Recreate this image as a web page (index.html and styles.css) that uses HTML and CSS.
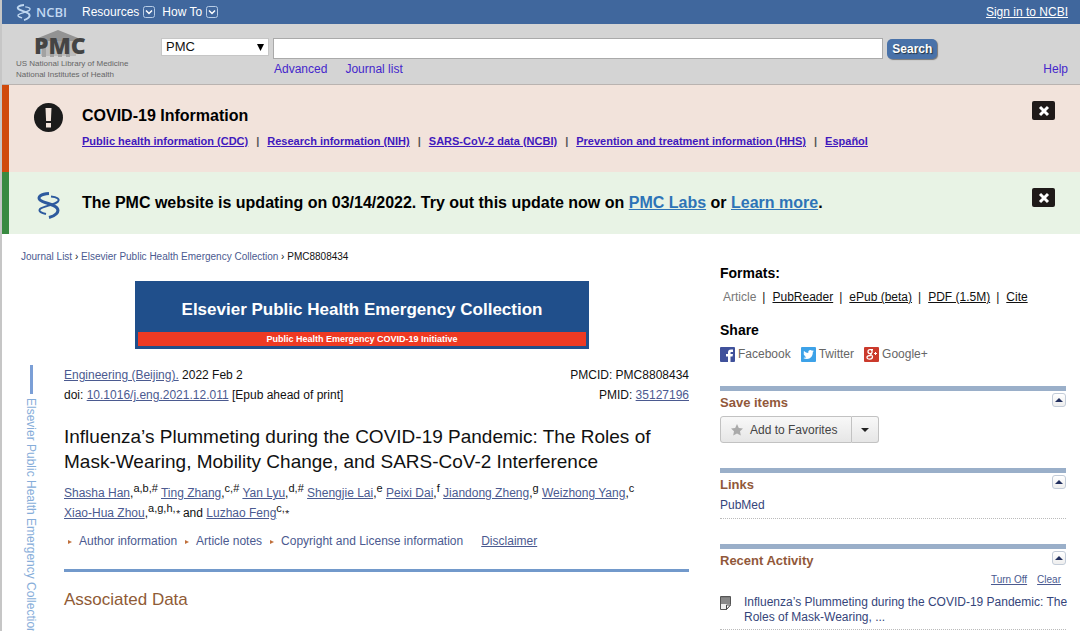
FILE: index.html
```html
<!DOCTYPE html>
<html lang="en">
<head>
<meta charset="utf-8">
<title>Influenza’s Plummeting during the COVID-19 Pandemic - PMC</title>
<link rel="stylesheet" href="styles.css">
</head>
<body>
<nav class="topbar">
  <a class="ncbi" href="#">
    <svg class="helix" viewBox="0 0 24 27" aria-hidden="true"><path class="strand" d="M12 1.500C4 2 0 5 3 8c3 3 14 4 17 8 3 4-2 8-8 9.500"/><path class="strand thin" d="M14 4.500c6 .5 9 2.500 7 5C18 13 6 14 3 17c-2 2.500 2 4 6 5"/></svg>
    <span>NCBI</span>
  </a>
  <button class="menu" type="button">Resources
    <svg viewBox="0 0 12 12" aria-hidden="true"><rect x=".5" y=".5" width="11" height="11" rx="2"/><path d="M3 4.500l3 3 3-3"/></svg>
  </button>
  <button class="menu" type="button">How To
    <svg viewBox="0 0 12 12" aria-hidden="true"><rect x=".5" y=".5" width="11" height="11" rx="2"/><path d="M3 4.500l3 3 3-3"/></svg>
  </button>
  <a class="signin" href="#">Sign in to NCBI</a>
</nav>

<header class="header">
  <div class="brand">
    <a class="pmc" href="#">
      <svg class="pmc-roof" viewBox="0 0 50 28" aria-hidden="true"><path d="M24 0L44 8v3H4V8z" fill="#939393"/><path d="M7 11h35v15H7z" fill="#bcbcbc"/><path d="M10 11v16M18 11v16M26 11v16M34 11v16" stroke="#a2a2a2" stroke-width="4"/></svg>
      <span>PMC</span>
    </a>
    <div class="org">US National Library of Medicine<br>National Institutes of Health</div>
  </div>
  <form class="search">
    <div class="db">
      <select aria-label="Database"><option>PMC</option></select>
      <svg viewBox="0 0 7 7" aria-hidden="true"><path d="M0 0h7L3.500 7z"/></svg>
    </div>
    <div class="query">
      <input type="text" aria-label="Search term">
      <div class="sub"><a href="#">Advanced</a><a href="#">Journal list</a></div>
    </div>
    <button class="go" type="submit">Search</button>
  </form>
  <a class="help" href="#">Help</a>
</header>

<section class="notice covid">
  <svg class="notice-icon" viewBox="0 0 29 29" aria-hidden="true"><circle cx="14.500" cy="14.500" r="14.500" fill="#1b1b1b"/><path d="M11.500 5h6l-.6 13h-4.800zM12 20h5v4.500h-5z" fill="#f2e4dc"/></svg>
  <div class="notice-body">
    <h2>COVID-19 Information</h2>
    <p class="notice-links"><a href="#">Public health information (CDC)</a><i>|</i><a href="#">Research information (NIH)</a><i>|</i><a href="#">SARS-CoV-2 data (NCBI)</a><i>|</i><a href="#">Prevention and treatment information (HHS)</a><i>|</i><a href="#">Español</a></p>
  </div>
  <button class="close" type="button" aria-label="Close"><svg viewBox="0 0 12 12" aria-hidden="true"><path d="M2 2l8 8M10 2l-8 8"/></svg></button>
</section>

<section class="notice update">
  <svg class="notice-icon helix" viewBox="0 0 24 27" aria-hidden="true"><path class="strand" d="M12 1.500C4 2 0 5 3 8c3 3 14 4 17 8 3 4-2 8-8 9.500"/><path class="strand thin" d="M14 4.500c6 .5 9 2.500 7 5C18 13 6 14 3 17c-2 2.500 2 4 6 5"/></svg>
  <div class="notice-body">
    <h2>The PMC website is updating on 03/14/2022. Try out this update now on <a href="#">PMC Labs</a> or <a href="#">Learn more</a>.</h2>
  </div>
  <button class="close" type="button" aria-label="Close"><svg viewBox="0 0 12 12" aria-hidden="true"><path d="M2 2l8 8M10 2l-8 8"/></svg></button>
</section>

<div class="page">
  <div class="left">
    <nav class="crumbs"><a href="#">Journal List</a> › <a href="#">Elsevier Public Health Emergency Collection</a> › <span>PMC8808434</span></nav>
    <div class="journal-banner">
      <strong>Elsevier Public Health Emergency Collection</strong>
      <span>Public Health Emergency COVID-19 Initiative</span>
    </div>
    <div class="content">
      <div class="rail">Elsevier Public Health Emergency Collection</div>
      <main class="article">
        <div class="cite">
          <div><a href="#">Engineering (Beijing).</a> 2022 Feb 2<br>doi: <a href="#">10.1016/j.eng.2021.12.011</a> [Epub ahead of print]</div>
          <div class="ids">PMCID: PMC8808434<br>PMID: <a href="#">35127196</a></div>
        </div>
        <h1>Influenza’s Plummeting during the COVID-19 Pandemic: The Roles of Mask-Wearing, Mobility Change, and SARS-CoV-2 Interference</h1>
        <p class="authors"><a href="#">Shasha Han</a>,<sup>a,b,#</sup> <a href="#">Ting Zhang</a>,<sup>c,#</sup> <a href="#">Yan Lyu</a>,<sup>d,#</sup> <a href="#">Shengjie Lai</a>,<sup>e</sup> <a href="#">Peixi Dai</a>,<sup>f</sup> <a href="#">Jiandong Zheng</a>,<sup>g</sup> <a href="#">Weizhong Yang</a>,<sup>c</sup> <a href="#">Xiao-Hua Zhou</a>,<sup>a,g,h,<small>⁎</small></sup> and <a href="#">Luzhao Feng</a><sup>c,<small>⁎</small></sup></p>
        <div class="info">
          <a class="toggle" href="#">Author information</a>
          <a class="toggle" href="#">Article notes</a>
          <a class="toggle" href="#">Copyright and License information</a>
          <a class="disclaimer" href="#">Disclaimer</a>
        </div>
        <h2 class="section-title">Associated Data</h2>
      </main>
    </div>
  </div>

  <aside class="side">
    <h3>Formats:</h3>
    <p class="formats"><span>Article</span><i>|</i><a href="#">PubReader</a><i>|</i><a href="#">ePub (beta)</a><i>|</i><a href="#">PDF (1.5M)</a><i>|</i><a href="#">Cite</a></p>
    <h3>Share</h3>
    <div class="share">
      <a href="#"><svg viewBox="0 0 15 15" aria-hidden="true"><rect width="15" height="15" rx="1" fill="#40519b"/><path d="M8 15V9.500H6V7h2V5.500C8 3.500 9 2.500 11 2.500h2V5h-1.500C10.500 5 10.500 5.500 10.500 6v1H13l-.5 2.500h-2V15z" fill="#fff"/></svg>Facebook</a>
      <a href="#"><svg viewBox="0 0 15 15" aria-hidden="true"><rect width="15" height="15" rx="1" fill="#3da2e8"/><path d="M3 4c1.200 1.300 2.600 2 4.300 2C7 4 8 3 9.400 3c.7 0 1.200.3 1.600.7.600-.1 1.100-.3 1.500-.6-.1.600-.4 1-.8 1.300L13 4.100l-1.200 1.200C12 9 9.500 12 6 12c-1.500 0-2.700-.4-3.700-1 1.200 0 2.200-.2 3-.9-1-.1-1.700-.6-2-1.500h.9C3.100 8.200 2.600 7.400 2.600 6.300l1 .2C2.600 5.800 2.500 4.900 3 4z" fill="#fff"/></svg>Twitter</a>
      <a href="#"><svg viewBox="0 0 15 15" aria-hidden="true"><rect width="15" height="15" rx="1" fill="#cb3a2c"/><g fill="none" stroke="#fff"><path stroke-width="1.300" d="M9 2.600H6a2 2 0 1 0 0 4 2 2 0 0 0 1.200-3.700M6.200 6.600c0 1.200 2.300 1.400 2.300 3.200C8.500 12.800 3 12.800 3 10.400c0-1.600 2-2 3.800-1.900"/><path d="M10 6.500h3M11.500 5v3"/></g></svg>Google+</a>
    </div>

    <section class="portlet">
      <div class="portlet-head"><h4>Save items</h4><button class="fold" type="button" aria-label="Collapse Save items"></button></div>
      <div class="fav">
        <button type="button"><svg viewBox="0 0 12 12" aria-hidden="true"><path d="M6 0l1.800 3.900L12 4.400 9 7.300l.8 4.300L6 9.500l-3.800 2.100L3 7.300 0 4.400l4.200-.5z" fill="#aaa"/></svg>Add to Favorites</button>
        <button class="more" type="button" aria-label="More options"></button>
      </div>
    </section>

    <section class="portlet">
      <div class="portlet-head"><h4>Links</h4><button class="fold" type="button" aria-label="Collapse Links"></button></div>
      <div class="row"><a href="#">PubMed</a></div>
    </section>

    <section class="portlet">
      <div class="portlet-head"><h4>Recent Activity</h4><button class="fold" type="button" aria-label="Collapse Recent Activity"></button></div>
      <div class="activity-tools"><a href="#">Turn Off</a><a href="#">Clear</a></div>
      <div class="row activity">
        <svg viewBox="0 0 11 14" aria-hidden="true"><path d="M.5.5h10v8l-4 5h-6z" fill="#eee" stroke="#555"/><path d="M1 1h9v7H1z" fill="#7b7b7b"/><path d="M1 3h9M1 5h9M1 7h9" stroke="#aaa" stroke-width=".6"/><path d="M6.500 13.500V9h4z" fill="#fff" stroke="#444"/></svg>
        <a href="#">Influenza’s Plummeting during the COVID-19 Pandemic: The Roles of Mask-Wearing, ...</a>
      </div>
    </section>
  </aside>
</div>
</body>
</html>
```

FILE: styles.css
```css
*, *::before { box-sizing: border-box; }

body {
  margin: 0;
  border-left: 2px solid #c6c6c6;
  background: #fff;
  color: #111;
  font: 12px/20px "Liberation Sans", Arial, sans-serif;
}

h1, h2, h3, h4, p { margin: 0; }
i { font-style: normal; }
a { color: #4b5a90; }
button, input, select { font: inherit; }
button { cursor: pointer; }
svg { display: block; flex: none; }

.helix { fill: none; stroke: currentColor; }
.strand { stroke-width: 3; }
.thin { stroke-width: 2; }

/* Top bar */
.topbar {
  display: flex;
  align-items: center;
  height: 24px;
  padding: 0 12px 0 14px;
  background: #40679d;
  color: #fff;
}
.ncbi {
  display: flex;
  align-items: center;
  gap: 4px;
  margin-right: 15px;
  color: #c0d8f1;
  font: 600 13px/24px "Open Sans", sans-serif;
  text-decoration: none;
}
.ncbi .helix { width: 16px; height: 17px; }
.menu {
  display: flex;
  align-items: center;
  gap: 4px;
  margin-right: 7px;
  padding: 0;
  border: 0;
  background: none;
  color: #fff;
}
.menu svg { width: 12px; height: 12px; fill: none; stroke: #b7cce6; }
.menu path { stroke: #fff; stroke-width: 1.5; }
.signin { margin-left: auto; color: #fff; }

/* Header */
.header {
  display: flex;
  align-items: flex-start;
  height: 61px;
  padding: 0 12px 0 14px;
  border-bottom: 1px solid #b9b3b0;
  background: #d4d4d4;
}
.brand { width: 145px; padding-top: 6px; }
.pmc {
  display: grid;
  width: 50px;
  height: 28px;
  margin-left: 18px;
  color: #444;
  font: 800 23px/30px "Open Sans", sans-serif;
  text-decoration: none;
}
.pmc svg, .pmc span { grid-area: 1 / 1; }
.pmc-roof { width: 50px; height: 28px; }
.org { color: #666; font-size: 8px; line-height: 11px; white-space: nowrap; }
.search { display: flex; align-items: flex-start; flex: 1; gap: 4px; padding-top: 14px; }
.db { display: grid; align-items: center; width: 108px; }
.db select, .db svg { grid-area: 1 / 1; }
.db select {
  appearance: none;
  width: 100%;
  height: 18px;
  padding: 0 4px;
  border: 1px solid #c6c6c6;
  border-radius: 0;
  background: #fff;
  color: #111;
  font-size: 13px;
  line-height: 16px;
}
.db svg { justify-self: end; width: 7px; height: 7px; margin-right: 5px; pointer-events: none; }
.query { flex: 1; }
.query input {
  display: block;
  width: 100%;
  height: 21px;
  border: 1px solid #aaa;
  background: #fff;
}
.sub { display: flex; gap: 18px; padding-left: 1px; }
.sub a, .help { color: #4526cc; text-decoration: none; }
.go {
  height: 20px;
  margin-top: 1px;
  padding: 0 5px;
  border: 0;
  border-radius: 5px;
  background: #4972a9;
  box-shadow: 1px 1px 1px #777;
  color: #fff;
  font-weight: bold;
  text-shadow: 1px 1px 1px #234;
}
.help { margin-left: 106px; padding-top: 35px; }

/* Notices */
.notice { display: flex; align-items: flex-start; padding: 0 25px; border-left: 7px solid; }
.covid { min-height: 87px; padding-top: 16px; border-color: #d04a0c; background: #f2e3db; }
.update { min-height: 62px; padding-top: 16px; border-color: #398a41; background: #e8f3e5; }
.notice-icon { width: 29px; height: 29px; margin: 2px 19px 0 0; }
.update .notice-icon { width: 24px; height: 27px; margin: 4px 21px 0 3px; color: #2d5a9e; }
.notice-body { flex: 1; }
.notice h2 { color: #000; font-size: 16px; line-height: 30px; }
.notice h2 a { color: #2d73b7; }
.notice-links { font-size: 11px; font-weight: bold; line-height: 20px; }
.notice-links a { color: #4119bd; }
.notice-links i { margin: 0 8px; color: #555; }
.close {
  display: grid;
  place-items: center;
  width: 23px;
  height: 19px;
  padding: 0;
  border: 0;
  border-radius: 2px;
  background: #1f1a19;
}
.close svg { width: 12px; height: 12px; stroke: #fff; stroke-width: 3; }

/* Page columns */
.page { display: flex; gap: 31px; padding: 13px 14px 0 19px; }
.left { flex: 1; }
.side { width: 346px; padding-top: 15px; }

.crumbs { font-size: 10px; }
.crumbs a { text-decoration: none; }
.journal-banner {
  display: flex;
  flex-direction: column;
  width: 454px;
  margin: 14px auto 0 114px;
  padding: 3px;
  background: #204f8b;
  color: #fff;
  text-align: center;
}
.journal-banner strong { padding-top: 4px; font-size: 17px; line-height: 44px; }
.journal-banner span { background: #ee3a23; font-size: 9px; font-weight: bold; line-height: 14px; }

.content { display: flex; padding-top: 16px; }
.rail {
  display: flex;
  align-items: center;
  gap: 4px;
  width: 20px;
  height: 266px;
  margin-right: 23px;
  color: #86add9;
  font-size: 12px;
  white-space: nowrap;
  writing-mode: vertical-rl;
}
.rail::before { flex: none; width: 3px; height: 29px; background: #7b9fd6; content: ""; }
.article { flex: 1; }
.cite { display: flex; justify-content: space-between; }
.ids { text-align: right; }
h1 { margin-top: 19px; font-size: 19px; font-weight: normal; line-height: 25px; }
.authors { margin-top: 9px; }
.authors a { white-space: nowrap; }
.authors sup { font-size: 11px; line-height: 0; }
.authors small { font-size: 8px; }
.info {
  display: flex;
  padding: 8px 0 18px;
  border-bottom: 3px solid #7299cb;
}
.info a { white-space: nowrap; }
.toggle { margin-right: 4px; text-decoration: none; }
.toggle::before {
  display: inline-block;
  width: 4px;
  margin: 0 7px 1px 4px;
  border: 2px solid transparent;
  border-left: 4px solid #c0703c;
  border-right: 0;
  content: "";
}
.disclaimer { margin-left: 14px; }
.section-title { margin-top: 16px; color: #8f5b36; font-size: 17px; font-weight: normal; line-height: 24px; }

/* Sidebar */
.side h3 { color: #000; font-size: 14px; line-height: 22px; }
.formats { padding: 3px 0 12px 3px; }
.formats a { color: #111; }
.formats span { color: #777; }
.formats i { margin: 0 7px 0 6px; }
.share { display: flex; gap: 10px; padding-top: 3px; }
.share a { display: flex; align-items: center; gap: 3px; color: #666; text-decoration: none; }
.share svg { width: 15px; height: 15px; }

.portlet { margin-top: 25px; border-top: 5px solid #9aafc9; }
.share + .portlet { margin-top: 22px; }
.portlet-head { display: flex; align-items: flex-start; justify-content: space-between; }
.portlet h4 { padding-top: 2px; color: #91583a; font-size: 13px; line-height: 20px; }
.fold {
  display: grid;
  place-items: center;
  width: 14px;
  height: 14px;
  margin-top: 2px;
  padding: 0;
  border: 1px solid #c3ccd8;
  border-radius: 3px;
  background: linear-gradient(#fff, #eee);
}
.fold::before { border: 4px solid transparent; border-top: 0; border-bottom-color: #23305f; content: ""; }
.fav { display: inline-flex; height: 27px; margin-top: 3px; vertical-align: top; }
.fav button {
  display: flex;
  align-items: center;
  gap: 7px;
  padding: 0 14px 0 10px;
  border: 1px solid #c2c2c2;
  border-radius: 3px 0 0 3px;
  background: linear-gradient(#f8f8f8, #e6e6e6);
  color: #444;
}
.fav svg { width: 12px; height: 12px; }
.fav .more { padding: 0 9px; border-left: 0; border-radius: 0 3px 3px 0; }
.more::before { border: 4px solid transparent; border-bottom: 0; border-top-color: #222; content: ""; }
.row { padding-bottom: 3px; border-bottom: 1px dotted #bbb; }
.row a { color: #35457a; text-decoration: none; }
.activity-tools { display: flex; justify-content: flex-end; gap: 10px; padding: 1px 5px 0 0; font-size: 10px; line-height: 15px; }
.activity { display: flex; gap: 13px; padding: 8px 0 4px; line-height: 15px; }
.activity svg { width: 11px; height: 14px; margin-top: 1px; }
.activity a { flex: 1; margin-right: -4px; }
```
